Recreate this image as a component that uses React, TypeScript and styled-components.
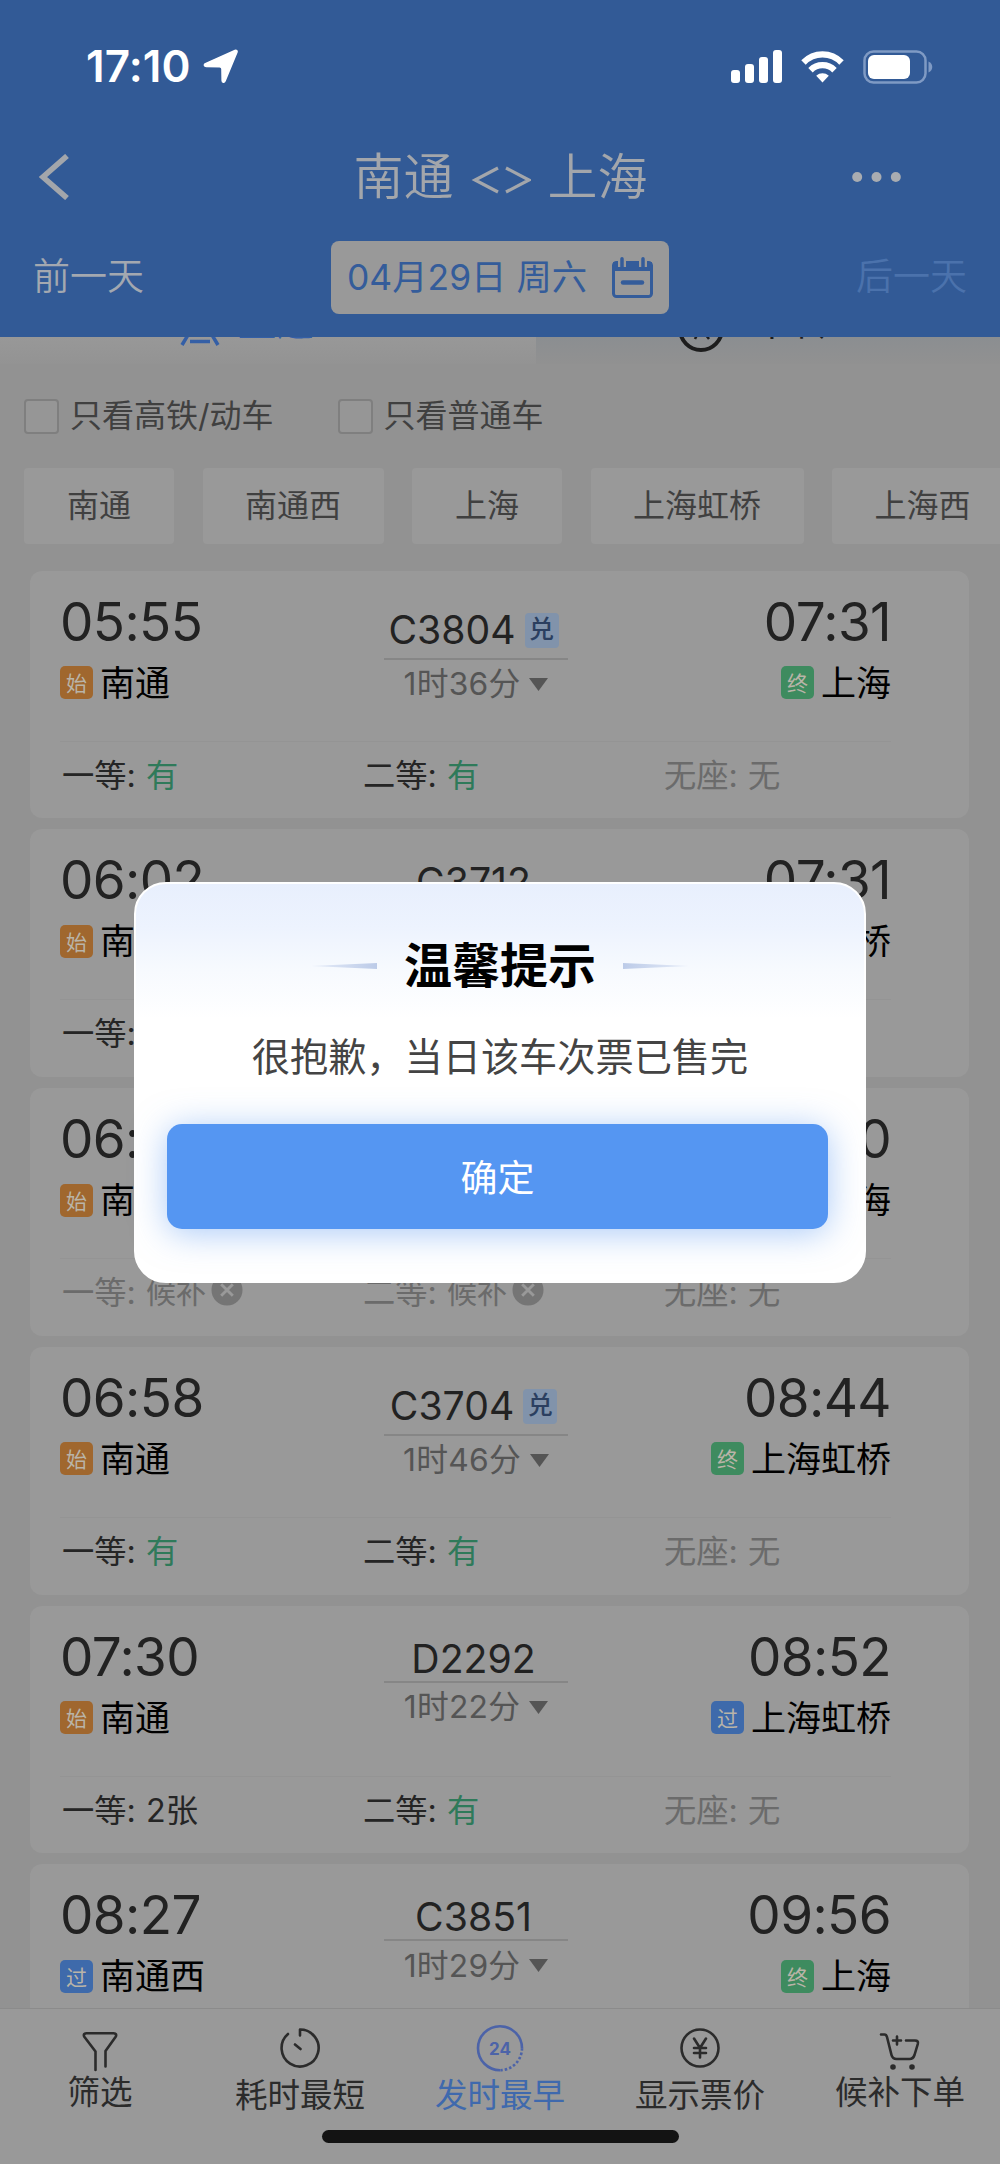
import React from 'react';
import styled, { createGlobalStyle } from 'styled-components';

const Global = createGlobalStyle`
  * { box-sizing: border-box; }
  body { margin: 0; background: #929292; }
`;

const Phone = styled.div`
  position: relative;
  width: 1000px;
  height: 2164px;
  overflow: hidden;
  display: flex;
  flex-direction: column;
  background: #929292;
  color: #222;
  font-family: Inter, "Noto Sans CJK SC", sans-serif;
  white-space: nowrap;
`;

const Header = styled.header`
  flex: none;
  height: 337px;
  background: #325a96;
  color: #a3a6ab;
`;

const StatusBar = styled.div`
  height: 132px;
  padding: 0 67px 0 86px;
  display: flex;
  align-items: center;
  justify-content: space-between;
  color: #fff;
`;

const Clock = styled.div`
  display: flex;
  align-items: center;
  gap: 12px;
  font-size: 44px;
  font-weight: 600;
  letter-spacing: 0.1px;
  line-height: 50px;
  svg { margin-top: 1px; }
`;

const StatusIcons = styled.div`
  display: flex;
  align-items: center;
  gap: 19px;
  padding-top: 1px;
`;

const NavBar = styled.div`
  height: 90px;
  padding: 0 98px 0 38px;
  display: grid;
  grid-template-columns: 60px 1fr 50px;
  align-items: center;
`;

const Title = styled.h1`
  margin: 0;
  padding-left: 51px;
  display: flex;
  justify-content: center;
  align-items: center;
  gap: 17px;
  font-size: 50px;
  line-height: 60px;
  font-weight: 350;
`;

const DateRow = styled.div`
  height: 111px;
  padding: 0 33px;
  display: grid;
  grid-template-columns: 1fr 338px 1fr;
  align-items: center;
  font-size: 37px;
`;

const DayLink = styled.span<{ $end?: boolean }>`
  padding-bottom: 7px;
  text-align: ${p => (p.$end ? 'right' : 'left')};
  color: ${p => (p.$end ? '#4b72ac' : '#a3a8b0')};
  font-weight: 350;
`;

const DateBox = styled.div`
  height: 73px;
  padding: 0 16px;
  display: flex;
  align-items: center;
  justify-content: space-between;
  border-radius: 8px;
  background: #999;
  color: #345c9a;
  font-size: 35.4px;
  span { padding-bottom: 6px; }
`;

const Tabs = styled.div`
  flex: none;
  height: 27px;
  display: grid;
  grid-template-columns: 536px 1fr;
`;

const Tab = styled.div<{ $active?: boolean }>`
  height: 27px;
  overflow: hidden;
  display: flex;
  align-items: flex-end;
  padding: 0 0 24px ${p => (p.$active ? '180px' : '141px')};
  gap: ${p => (p.$active ? '18px' : '28px')};
  background: ${p =>
    p.$active ? 'linear-gradient(#989898, #939393)' : 'linear-gradient(#8b8e91, #919191)'};
  color: ${p => (p.$active ? '#345fa6' : '#1d1d1d')};
  font-size: 38px;
  line-height: 38px;
  font-weight: ${p => (p.$active ? 700 : 400)};
  svg { flex: none; margin-bottom: ${p => (p.$active ? '-8px' : '-13px')}; }
  span { display: block; }
`;

const Filters = styled.div`
  flex: none;
  height: 104px;
  padding: 0 24px 1px;
  display: flex;
  align-items: center;
  gap: 64px;
`;

const Filter = styled.label`
  display: flex;
  align-items: center;
  gap: 11px;
  font-size: 32px;
  line-height: 40px;
  color: #404040;
`;

const Box = styled.span`
  width: 35px;
  height: 35px;
  margin-top: 1px;
  border: 2px solid #7f7f7f;
  border-radius: 4px;
  background: #969696;
`;

const Chips = styled.div`
  flex: none;
  height: 76px;
  padding-left: 24px;
  display: flex;
  gap: 28.5px;
`;

const Chip = styled.div<{ $w: number }>`
  flex: none;
  width: ${p => p.$w}px;
  height: 76px;
  display: flex;
  align-items: center;
  justify-content: center;
  padding-bottom: 7px;
  border-radius: 4px;
  background: #999;
  color: #404040;
  font-size: 32px;
`;

const List = styled.main`
  flex: none;
  height: 1464px;
  padding: 26.5px 31px 0 30px;
  display: flex;
  flex-direction: column;
  gap: 11px;
  overflow: hidden;
`;

const Card = styled.article`
  flex: none;
  height: 247.8px;
  padding: 25px 78px 0 30px;
  border-radius: 12px;
  background: #999;
`;

const Trip = styled.div`
  height: 146px;
  display: grid;
  grid-template-columns: 300px 232px 1fr;
  border-bottom: 1px solid #949494;
`;

const End = styled.div<{ $right?: boolean }>`
  display: flex;
  flex-direction: column;
  align-items: ${p => (p.$right ? 'flex-end' : 'flex-start')};
`;

const Time = styled.div`
  font-size: 53px;
  line-height: 52px;
  letter-spacing: -0.6px;
`;

const Station = styled.div`
  height: 65px;
  display: flex;
  align-items: center;
  gap: 7px;
  color: #000;
  font-size: 35px;
`;

const tones = { 始: '#a0672e', 终: '#3e8b5f', 过: '#3e6aab' };

const Tag = styled.span<{ $kind: keyof typeof tones }>`
  width: 33px;
  height: 33px;
  margin-top: 5px;
  padding-bottom: 1px;
  display: flex;
  align-items: center;
  justify-content: center;
  border-radius: 5px;
  background: ${p => tones[p.$kind]};
  color: #b9b4a8;
  font-size: 21px;
`;

const Middle = styled.div<{ $plain?: boolean }>`
  padding-top: ${p => (p.$plain ? '6px' : '12px')};
  display: flex;
  flex-direction: column;
  align-items: center;
`;

const TrainNo = styled.div<{ $plain?: boolean }>`
  height: ${p => (p.$plain ? '44px' : '50px')};
  margin-right: 5px;
  display: flex;
  align-items: flex-start;
  gap: 9px;
  font-size: 39.2px;
  line-height: 44px;
`;

const Swap = styled.span`
  width: 34px;
  height: 35px;
  margin-top: 5px;
  padding-bottom: 2px;
  display: flex;
  align-items: center;
  justify-content: center;
  border-radius: 4px;
  background: #8193ab;
  color: #2b3f60;
  font-size: 25px;
  font-weight: 500;
`;

const Rule = styled.div`
  width: 184px;
  height: 2px;
  background: #868686;
`;

const Duration = styled.div`
  height: 43px;
  display: flex;
  align-items: center;
  gap: 9px;
  color: #555;
  font-size: 31.8px;
  letter-spacing: 0.2px;
  svg { margin-top: 6px; }
`;

const Seats = styled.div`
  height: 62px;
  padding-left: 2px;
  display: grid;
  grid-template-columns: 301px 301px 1fr;
  align-items: center;
`;

const Seat = styled.div<{ $muted?: boolean }>`
  display: flex;
  align-items: center;
  font-size: 32.3px;
  white-space: pre;
  color: ${p => (p.$muted ? '#6b6b6b' : '#252525')};
`;

const Value = styled.span<{ $ok?: boolean; $waiting?: boolean }>`
  margin-left: 1px;
  font-size: ${p => (p.$waiting ? '30px' : 'inherit')};
  color: ${p => (p.$ok ? '#2f7a5a' : 'inherit')};
`;

const BottomBar = styled.nav`
  flex: none;
  height: 156px;
  padding-top: 15px;
  display: grid;
  grid-template-columns: repeat(5, 200px);
  width: 1000px;
  border-top: 1px solid #8b8b8b;
  background: #999;
`;

const Item = styled.div<{ $active?: boolean; $up?: boolean }>`
  display: flex;
  flex-direction: column;
  align-items: center;
  color: ${p => (p.$active ? '#3f69ad' : '#2b2b2b')};
  font-size: 32.5px;
  line-height: 40px;
  svg { display: block; }
  span { margin-top: ${p => (p.$up ? '1px' : '4px')}; }
`;

const HomeIndicator = styled.div`
  position: absolute;
  left: 322px;
  top: 2130px;
  width: 357px;
  height: 13px;
  border-radius: 7px;
  background: #131313;
`;

const Dialog = styled.section`
  position: absolute;
  left: 134px;
  top: 882px;
  width: 732px;
  height: 401px;
  padding: 52px 36px 50px 31px;
  display: flex;
  flex-direction: column;
  align-items: center;
  border: 2px solid #fff;
  border-radius: 32px;
  background: linear-gradient(180deg, #e8effd 0%, #edf3fe 11%, #f7fafe 22%, #ffffff 34%);
`;

const DialogTitle = styled.h2`
  margin: 0 0 0 5px;
  height: 60px;
  display: flex;
  align-items: center;
  gap: 27px;
  color: #000;
  font-size: 48px;
  line-height: 60px;
  font-weight: 700;
`;

const Dash = styled.i<{ $flip?: boolean }>`
  width: 66px;
  height: 6px;
  background: linear-gradient(${p => (p.$flip ? '270deg' : '90deg')}, rgba(195, 208, 235, 0.3), #bccbe8);
  clip-path: ${p => (p.$flip ? 'polygon(0 0, 100% 50%, 0 100%)' : 'polygon(0 50%, 100% 0, 100% 100%)')};
`;

const Message = styled.p`
  margin: 35px 0 0 5px;
  color: #444;
  font-size: 38.2px;
  line-height: 52px;
`;

const Confirm = styled.button`
  margin: 41px 0 0;
  padding: 0 0 2px;
  width: 661px;
  height: 105px;
  flex: none;
  border: 0;
  border-radius: 15px;
  background: #5596f2;
  box-shadow: 0 4px 34px rgba(85, 150, 242, 0.5);
  color: #fff;
  font: 400 37px Inter, "Noto Sans CJK SC", sans-serif;
`;

const Arrow = () => (
  <svg width="35" height="35" viewBox="0 0 35 35" fill="#fff" stroke="#fff" strokeWidth="1.600" strokeLinejoin="round">
    <path d="M32 1.500c1.300-.6 2.400.5 1.900 1.800L22 32c-.7 1.700-2.800 1.400-2.800-.5L19 20c0-1.600-.8-2.400-2.400-2.400L3.200 17.400C1.200 17.400.8 15.400 2.500 14.600Z" />
  </svg>
);

const Signal = () => (
  <svg width="51" height="33" viewBox="0 0 51 33" fill="#fff">
    <rect x="0" y="20" width="9" height="13" rx="3" />
    <rect x="14" y="14" width="9" height="19" rx="3" />
    <rect x="28" y="7" width="9" height="26" rx="3" />
    <rect x="42" y="0" width="9" height="33" rx="3" />
  </svg>
);

const Wifi = () => (
  <svg width="43" height="32" viewBox="0 0 43 32" fill="none" stroke="#fff" strokeWidth="6.200">
    <path d="M2.500 11.500C13 .7 30 .7 40.500 11.500" />
    <path d="M9.500 19.200c6.600-6.700 17.400-6.700 24 0" />
    <path d="M21.500 31.500l-6.300-6.700c3.600-3.300 9-3.300 12.600 0Z" fill="#fff" stroke="none" />
  </svg>
);

const Battery = () => (
  <svg width="70" height="34" viewBox="0 0 70 34">
    <rect x="1.500" y="1.500" width="61" height="31" rx="9" fill="none" stroke="#7f9ac4" strokeWidth="2.500" />
    <rect x="5" y="5" width="42" height="24" rx="6" fill="#fff" />
    <path d="M65.500 11.500c5 2 5 9 0 11Z" fill="#7f9ac4" />
  </svg>
);

const Back = () => (
  <svg width="32" height="46" viewBox="0 0 32 46" fill="none" stroke="#a3a6ab" strokeWidth="5.600">
    <path d="M29 2 5 23l24 21" />
  </svg>
);

const Dots = () => (
  <svg width="49" height="12" viewBox="0 0 49 12" fill="#a9acb1">
    <circle cx="5.200" cy="6" r="5" /><circle cx="24.500" cy="6" r="5" /><circle cx="43.800" cy="6" r="5" />
  </svg>
);

const Swapper = () => (
  <svg width="60" height="28" viewBox="0 0 60 28" fill="none" stroke="#a3a6ab" strokeWidth="3.200" style={{ marginTop: 5 }}>
    <path d="M27 2 4 14l23 12M35 2l23 12-23 12" />
  </svg>
);

const Calendar = () => (
  <svg width="41" height="42" viewBox="0 0 41 42" fill="none" stroke="#345c9a">
    <rect x="1.500" y="5.500" width="38" height="34" rx="3" strokeWidth="3" />
    <path d="M1 5h39v9H1Z" fill="#345c9a" stroke="none" />
    <path d="M10 1v9M31 1v9" stroke="#999" strokeWidth="8" />
    <path d="M10 1.800v8.200M31 1.800v8.200" strokeWidth="3.500" strokeLinecap="round" />
    <path d="M11 25.500h19" strokeWidth="4.500" strokeLinecap="round" />
  </svg>
);

const TrainIcon = () => (
  <svg width="40" height="36" viewBox="0 0 40 36" fill="none" stroke="#345fa6" strokeWidth="3.500">
    <rect x="7" y="-12" width="26" height="34" rx="6" /><path d="M8 23 2 33M32 23l6 10M10 29.500h20" />
  </svg>
);

const TransferIcon = () => (
  <svg width="48" height="44" viewBox="0 0 48 44" fill="none" stroke="#1d1d1d" strokeWidth="4">
    <circle cx="24" cy="20" r="21" /><path d="M16 22h6l-4 8M26 22l6 8" strokeWidth="2.500" />
  </svg>
);

const Caret = () => (
  <svg width="19" height="13" viewBox="0 0 19 13"><path d="M0 0h19l-9.500 13Z" fill="#555" /></svg>
);

const Close = () => (
  <svg width="32" height="32" viewBox="0 0 33 33" style={{ marginLeft: 5 }}>
    <circle cx="16.500" cy="16.500" r="16" fill="#757575" />
    <path d="m10.500 10.500 12 12m0-12-12 12" stroke="#999" strokeWidth="3" />
  </svg>
);

const line = { fill: 'none', stroke: '#2b2b2b', strokeWidth: 2.6, strokeLinecap: 'round', strokeLinejoin: 'round' } as const;

const Funnel = () => (
  <svg width="48" height="48" viewBox="0 0 48 48" {...line}>
    <path d="M19.500 46V27.500L8.500 13c-1.300-2-.6-3.800 1.800-3.800h27.400c2.400 0 3.100 1.800 1.800 3.800L29.500 27v15.500" />
  </svg>
);
const Timer = () => (
  <svg width="48" height="48" viewBox="0 0 48 48" {...line}>
    <path d="M24 11.500V5.500A18.500 18.500 0 1 1 12 10M19 20.500l5.500 4.500" />
  </svg>
);
const DayIcon = () => (
  <svg width="48" height="48" viewBox="0 0 48 48" fill="none" stroke="#4c63a8" strokeWidth="2.600">
    <path d="M24 46.200A22 22 0 1 1 46 24.200" />
    <path d="M46 24.200A22 22 0 0 1 24 46.200" strokeDasharray="2.500 2" />
    <text x="24" y="30.500" textAnchor="middle" fill="#4c63a8" stroke="none" fontFamily="Inter, sans-serif" fontSize="17" fontWeight="700">24</text>
  </svg>
);
const Yen = () => (
  <svg width="48" height="48" viewBox="0 0 48 48" {...line}>
    <circle cx="24" cy="24" r="18.500" />
    <path d="m18 14.500 6 9.500 6-9.500M24 24v9.500M18 24h12M18 29h12" />
  </svg>
);
const Cart = () => (
  <svg width="48" height="48" viewBox="0 0 48 48" {...line}>
    <path d="M5 10.500h3.500c1.500 0 2 .8 2.500 2.500l4.500 18c.8 3 2.200 4 5 4h13c3 0 4-1 5-4l3.300-11c.6-2.500-.3-3.500-2.800-3.500h-9M17 16.500h8M21 12.500v8" />
    <circle cx="17" cy="43" r="1.500" fill="#2b2b2b" /><circle cx="36" cy="43" r="1.500" fill="#2b2b2b" />
  </svg>
);

type Kind = keyof typeof tones;
interface Train {
  dep: string; arr: string; from: string; to: string; fk: Kind; tk: Kind;
  no: string; swap?: boolean; dur: string; first: string; second: string;
}

const trains: Train[] = [
  { dep: '05:55', arr: '07:31', from: '南通', to: '上海', fk: '始', tk: '终', no: 'C3804', swap: true, dur: '1时36分', first: '有', second: '有' },
  { dep: '06:02', arr: '07:31', from: '南通', to: '上海虹桥', fk: '始', tk: '终', no: 'C3712', dur: '1时29分', first: '有', second: '有' },
  { dep: '06:30', arr: '08:20', from: '南通', to: '上海', fk: '始', tk: '终', no: 'C3802', dur: '1时50分', first: '候补', second: '候补' },
  { dep: '06:58', arr: '08:44', from: '南通', to: '上海虹桥', fk: '始', tk: '终', no: 'C3704', swap: true, dur: '1时46分', first: '有', second: '有' },
  { dep: '07:30', arr: '08:52', from: '南通', to: '上海虹桥', fk: '始', tk: '过', no: 'D2292', dur: '1时22分', first: '2张', second: '有' },
  { dep: '08:27', arr: '09:56', from: '南通西', to: '上海', fk: '过', tk: '终', no: 'C3851', dur: '1时29分', first: '有', second: '有' },
];

const SeatCell = ({ label, value }: { label: string; value: string }) => {
  const waiting = value === '候补';
  return (
    <Seat $muted={waiting || value === '无'}>
      {label + ': '}<Value $ok={value === '有'} $waiting={waiting}>{value}</Value>{waiting && <Close />}
    </Seat>
  );
};

const TrainCard = ({ t }: { t: Train }) => (
  <Card>
    <Trip>
      <End>
        <Time>{t.dep}</Time>
        <Station><Tag $kind={t.fk}>{t.fk}</Tag>{t.from}</Station>
      </End>
      <Middle $plain={!t.swap}>
        <TrainNo $plain={!t.swap}>{t.no}{t.swap && <Swap>兑</Swap>}</TrainNo>
        <Rule />
        <Duration>{t.dur}<Caret /></Duration>
      </Middle>
      <End $right>
        <Time>{t.arr}</Time>
        <Station><Tag $kind={t.tk}>{t.tk}</Tag>{t.to}</Station>
      </End>
    </Trip>
    <Seats>
      <SeatCell label="一等" value={t.first} />
      <SeatCell label="二等" value={t.second} />
      <SeatCell label="无座" value="无" />
    </Seats>
  </Card>
);

export default function App() {
  return (
    <>
      <Global />
      <Phone>
        <Header>
          <StatusBar>
            <Clock>17:10<Arrow /></Clock>
            <StatusIcons><Signal /><Wifi /><Battery /></StatusIcons>
          </StatusBar>
          <NavBar>
            <Back />
            <Title>南通<Swapper />上海</Title>
            <Dots />
          </NavBar>
          <DateRow>
            <DayLink>前一天</DayLink>
            <DateBox><span>04月29日 周六</span><Calendar /></DateBox>
            <DayLink $end>后一天</DayLink>
          </DateRow>
        </Header>
        <Tabs>
          <Tab $active><TrainIcon /><span>直达</span></Tab>
          <Tab><TransferIcon /><span>中转</span></Tab>
        </Tabs>
        <Filters>
          <Filter><Box />只看高铁/动车</Filter>
          <Filter><Box />只看普通车</Filter>
        </Filters>
        <Chips>
          <Chip $w={150}>南通</Chip>
          <Chip $w={181}>南通西</Chip>
          <Chip $w={150}>上海</Chip>
          <Chip $w={213}>上海虹桥</Chip>
          <Chip $w={181}>上海西</Chip>
        </Chips>
        <List>{trains.map(t => <TrainCard key={t.no} t={t} />)}</List>
        <BottomBar>
          <Item $up><Funnel /><span>筛选</span></Item>
          <Item><Timer /><span>耗时最短</span></Item>
          <Item $active><DayIcon /><span>发时最早</span></Item>
          <Item><Yen /><span>显示票价</span></Item>
          <Item $up><Cart /><span>候补下单</span></Item>
        </BottomBar>
        <HomeIndicator />
        <Dialog role="dialog">
          <DialogTitle><Dash />温馨提示<Dash $flip /></DialogTitle>
          <Message>很抱歉，当日该车次票已售完</Message>
          <Confirm>确定</Confirm>
        </Dialog>
      </Phone>
    </>
  );
}
